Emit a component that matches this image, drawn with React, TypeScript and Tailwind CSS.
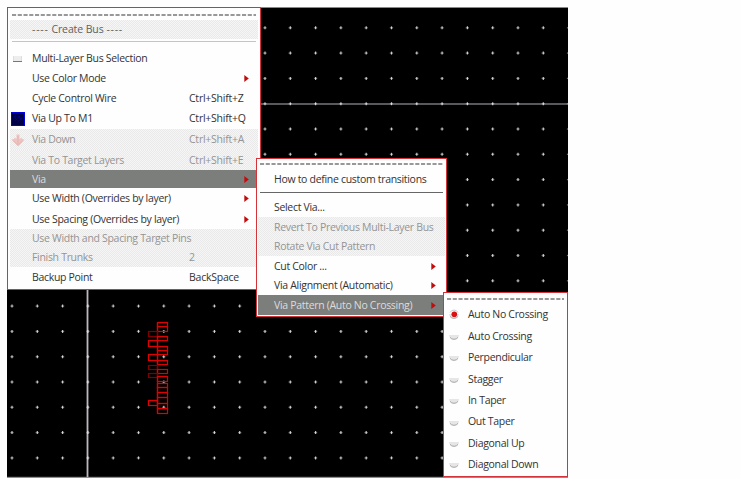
import React from "react";

type Item = {
  label: string;
  keys?: string;
  h: string;
  disabled?: boolean;
  active?: boolean;
  arrow?: boolean;
  icon?: "box" | "layer" | "down";
};

const dither =
  "bg-[#f0f0f0] bg-[conic-gradient(#e9e9e9_25%,#f6f6f6_0_50%,#e9e9e9_0_75%,#f6f6f6_0)] bg-[length:2px_2px]";

const mainItems: Item[] = [
  { label: "Multi-Layer Bus Selection", h: "h-[20px]", icon: "box" },
  { label: "Use Color Mode", h: "h-[20px]", arrow: true },
  { label: "Cycle Control Wire", keys: "Ctrl+Shift+Z", h: "h-[20px]" },
  { label: "Via Up To M1", keys: "Ctrl+Shift+Q", h: "h-[21px]", icon: "layer" },
  { label: "Via Down", keys: "Ctrl+Shift+A", h: "h-[21px]", icon: "down", disabled: true },
  { label: "Via To Target Layers", keys: "Ctrl+Shift+E", h: "h-[20px]", disabled: true },
  { label: "Via", h: "h-[18px]", arrow: true, active: true },
  { label: "Use Width (Overrides by layer)", h: "h-[21px]", arrow: true },
  { label: "Use Spacing (Overrides by layer)", h: "h-[20px]", arrow: true },
  { label: "Use Width and Spacing Target Pins", h: "h-[19px]", disabled: true },
  { label: "Finish Trunks", keys: "2", h: "h-[19px]", disabled: true },
  { label: "Backup Point", keys: "BackSpace", h: "h-[20px]" },
];

const viaItems: Item[] = [
  { label: "Select Via...", h: "h-[20px]" },
  { label: "Revert To Previous Multi-Layer Bus", h: "h-[20px]", disabled: true },
  { label: "Rotate Via Cut Pattern", h: "h-[19px]", disabled: true },
  { label: "Cut Color ...", h: "h-[20px]", arrow: true },
  { label: "Via Alignment (Automatic)", h: "h-[19px]", arrow: true },
  { label: "Via Pattern (Auto No Crossing)", h: "h-[20px]", arrow: true, active: true },
];

const patterns = [
  "Auto No Crossing", "Auto Crossing", "Perpendicular", "Stagger",
  "In Taper", "Out Taper", "Diagonal Up", "Diagonal Down",
];

function tone(i: Item) {
  return i.active ? "bg-[#7c7e7b] text-[#dcdcdc]" : i.disabled ? `${dither} text-[#949494]` : "text-[#333]";
}

function Arrow() {
  return (
    <svg width="5" height="7" viewBox="0 0 5 7" className="shrink-0">
      <path d="M0.3 0 4.800 3.500 0.3 7z" fill="#c40c0c" />
    </svg>
  );
}

function ItemIcon({ kind }: { kind?: Item["icon"] }) {
  if (kind === "box")
    return (
      <svg width="14" height="14" viewBox="0 0 14 14">
        <path d="M2.500 5v5.500h8V5" fill="#ededed" stroke="#dedede" />
        <path d="M2 10.500h9" stroke="#777" />
      </svg>
    );
  if (kind === "layer")
    return (
      <svg width="14" height="14" viewBox="0 0 14 14">
        <rect x=".5" y=".5" width="13" height="13" fill="#000048" stroke="#0000e0" />
        <path d="M3 5l2-2M4 9l5-5M6 11l5-5M4 6l4 4M7 4l3 3" stroke="#0000a8" strokeWidth=".7" />
      </svg>
    );
  if (kind === "down")
    return (
      <svg width="14" height="14" viewBox="0 0 14 14">
        <path d="M5.500 1.500h3V6l2-1.500L11 6l2.500.5L7 13 .5 6.500 3 6l.5-1.500L5.500 6z" fill="#efc4c0" />
        <path d="M2 7.500l5 5 5-5M7 3v8" stroke="#e3b3af" fill="none" />
      </svg>
    );
  return null;
}

function TearOff() {
  return (
    <svg width="100%" height="2" className="block">
      <line x1="0" y1="1" x2="100%" y2="1" stroke="#777" strokeWidth="1.3" strokeDasharray="4.100 1.650" />
    </svg>
  );
}

function Grid() {
  const wires = [
    [27, 22, 10, 4], [27, 26, 10, 5], [18, 31, 9, 5], [27, 36, 10, 4], [18, 40, 9, 6],
    [27, 46, 10, 4], [27, 50, 10, 4], [18, 54, 9, 6], [27, 60, 10, 4], [18, 65, 9, 4],
    [27, 69, 10, 4], [18, 73, 9, 4], [27, 76, 10, 5], [27, 83, 10, 4], [27, 87, 10, 5],
    [27, 92, 10, 5], [27, 97, 10, 6], [18, 100, 9, 5], [27, 103, 10, 5], [27, 108, 10, 5],
  ];
  const dim = [2, 9, 11];
  return (
    <svg width="741" height="479" viewBox="0 0 741 479">
      <rect x="7" y="7.500" width="561" height="469.800" fill="#000" />
      <path d="M7 7.500H568M7 477.300H568" stroke="#888" />
      <path d="M260 104H568" stroke="#77777d" strokeWidth="1.600" />
      <path d="M87.500 289V477" stroke="#bdb8c0" strokeWidth="1.800" />
      {Array.from({ length: 18 }, (_, r) =>
        Array.from({ length: 23 }, (_, c) => {
          const x = 12 + c * 25.3;
          const y = 27.8 + r * 25.3;
          return (
            <g key={`${r}-${c}`}>
              <path d={`M${x - 1.7} ${y}h3.300`} stroke="#aaa" strokeWidth="1.300" opacity=".65" />
              <path d={`M${x} ${y - 1.5}v3`} stroke="#fff" strokeWidth="1.200" opacity=".75" />
            </g>
          );
        })
      )}
      <path d="M157.500 322.500V413" stroke="#d90000" strokeWidth="1.300" />
      {wires.map(([x, y, w, h], i) => (
        <rect key={i} x={130.5 + x} y={300.5 + y} width={w} height={h} fill="none" strokeWidth="1.200" stroke={dim.includes(i) ? "#800000" : "#e00000"} />
      ))}
      <rect x="568" width="173" height="479" fill="#fefefe" />
    </svg>
  );
}

export default function App() {
  return (
    <div className="relative h-[479px] w-[741px] overflow-hidden bg-[#fefefe] font-['Open_Sans','Noto_Sans',sans-serif] text-[10.500px] leading-none tracking-[-0.310px] whitespace-nowrap text-[#333]">
      <Grid />
      <div className="absolute top-[7px] left-[7px] flex h-[283px] w-[254px] flex-col border border-[#d43339] bg-[#fefefe] px-[2px] pt-[6px]">
        <div className="px-[2px]"><TearOff /></div>
        <div className={`mt-[4px] flex h-[19px] items-center pl-[22px] text-[#606060] ${dither}`}>
          <div className="flex w-[91px] justify-between">
            <span className="tracking-[0.750px]">----</span>
            <span className="tracking-[-0.100px]">Create Bus</span>
            <span className="tracking-[0.750px]">----</span>
          </div>
        </div>
        <div className="mx-[2px] mt-[2px] mb-[6px] h-px bg-[#c4c4c4]" />
        {mainItems.map((i) => (
          <div key={i.label} className={`flex shrink-0 items-center pr-[9px] ${i.h} ${tone(i)}`}>
            <span className="w-[22px] pl-[1px]"><ItemIcon kind={i.icon} /></span>
            <span className="w-[157px]">{i.label}</span>
            <span className="flex-1 tracking-[-0.240px]">{i.keys}</span>
            {i.arrow && <Arrow />}
          </div>
        ))}
      </div>
      <div className="absolute top-[158px] left-[256px] flex h-[159px] w-[191px] flex-col border border-[#d43339] bg-[#fefefe] px-px pt-[4px]">
        <div className="px-[2px]"><TearOff /></div>
        <div className="flex h-[27px] items-center pt-[2px] pl-[16px]">How to define custom transitions</div>
        <div className="mx-[2px] mb-[4px] h-px shrink-0 bg-[#666]" />
        {viaItems.map((i) => (
          <div key={i.label} className={`flex shrink-0 items-center justify-between pr-[9px] pl-[16px] ${i.h} ${tone(i)}`}>
            <span>{i.label}</span>
            {i.arrow && <Arrow />}
          </div>
        ))}
      </div>
      <div className="absolute top-[292px] left-[443px] flex h-[185px] w-[125px] flex-col border border-[#d43339] bg-[#fefefe] px-[3px] pt-[5px]">
        <TearOff />
        {patterns.map((p, n) => (
          <div key={p} className={`flex h-[21.400px] shrink-0 items-center ${n === 0 ? "mt-[4px]" : ""}`}>
            <svg width="14" height="14" viewBox="0 0 14 14" className="mr-[7px]">
              <path d="M2 6a5 4.500 0 0 0 10 0z" fill="#e6e6e6" />
              <path d="M3 8.300a4.600 4 0 0 0 8 0" fill="none" stroke="#a8a8a8" />
              {n === 0 && <path d="M3 4.500a4.500 4.500 0 0 1 8 0" fill="none" stroke="#ccc" />}
              {n === 0 && <circle cx="7.300" cy="6.200" r="2.800" fill="#dc1010" />}
            </svg>
            {p}
          </div>
        ))}
      </div>
    </div>
  );
}
